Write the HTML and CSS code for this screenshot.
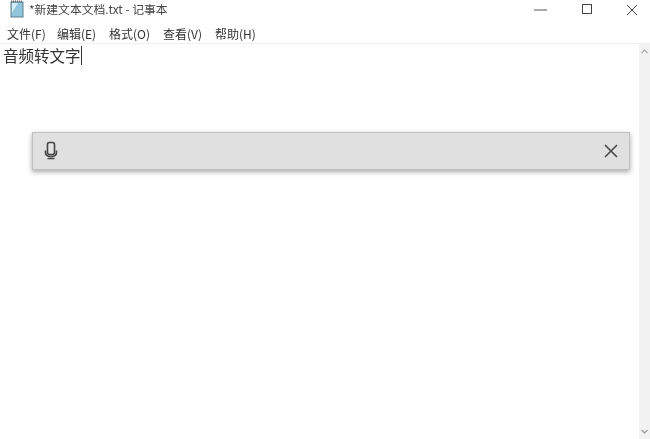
FILE: index.html
```html
<!DOCTYPE html>
<html lang="zh-CN">
<head>
<meta charset="utf-8">
<title>记事本</title>
<link rel="stylesheet" href="styles.css">
</head>
<body>
<div class="window">
  <header class="titlebar">
    <svg class="app-icon" width="18" height="18" viewBox="0 0 18 18">
      <rect x="3" y="2" width="12" height="15" fill="#8fc4da" stroke="#5f7f90"/>
      <path d="M4 3h6l-6 10z" fill="#d4ecf5"/>
      <path d="M3 1.5h12" stroke="#666" stroke-width="2" stroke-dasharray="1 1"/>
    </svg>
    <span class="title">*新建文本文档.txt - 记事本</span>
    <div class="controls">
      <svg class="ctl" width="46" height="20" viewBox="0 0 46 20"><path d="M16 10h13" stroke="#555" stroke-width="1"/></svg>
      <svg class="ctl" width="46" height="20" viewBox="0 0 46 20"><rect x="18.500" y="4.500" width="9" height="9" fill="none" stroke="#444" stroke-width="1"/></svg>
      <svg class="ctl" width="46" height="20" viewBox="0 0 46 20"><path d="M17 5l10 10M27 5L17 15" stroke="#444" stroke-width="1" fill="none"/></svg>
    </div>
  </header>
  <nav class="menubar">
    <span class="m1">文件(F)</span><span class="m2">编辑(E)</span><span class="m3">格式(O)</span><span class="m4">查看(V)</span><span class="m5">帮助(H)</span>
  </nav>
  <main class="body">
    <div class="editor"><span class="text">音频转文字</span><span class="caret"></span></div>
    <aside class="scrollbar">
      <svg width="11" height="11" viewBox="0 0 11 11"><path d="M2.500 7L5.500 4l3 3" fill="none" stroke="#aaa" stroke-width="1.2"/></svg>
      <svg width="11" height="11" viewBox="0 0 11 11"><path d="M2.500 4l3 3 3-3" fill="none" stroke="#999" stroke-width="1.2"/></svg>
    </aside>
  </main>
  <div class="voicebar">
    <svg width="14" height="20" viewBox="0 0 14 20">
      <rect x="3.500" y="1.500" width="7" height="12" rx="2" fill="#e4e4e4" stroke="#444" stroke-width="1.6"/>
      <path d="M1.500 9.500v2c0 2.500 2 4 5.500 4s5.500-1.500 5.500-4v-2M3.500 17.500h7" fill="none" stroke="#444" stroke-width="1.6"/>
    </svg>
    <svg width="16" height="16" viewBox="0 0 16 16"><path d="M2 2l12 12M14 2L2 14" stroke="#444" stroke-width="1.5" fill="none"/></svg>
  </div>
</div>
</body>
</html>
```
FILE: styles.css
```css
* { box-sizing: border-box; }
html, body { margin: 0; height: 100%; background: #fff; overflow: hidden; }
.window {
  position: relative;
  width: 650px;
  height: 439px;
  display: flex;
  flex-direction: column;
  font-family: "Noto Sans CJK SC", "Liberation Sans", sans-serif;
  color: #333;
  filter: blur(0.35px);
}
.titlebar {
  height: 20px;
  display: flex;
  align-items: flex-start;
  padding-left: 8px;
  flex: none;
}
.app-icon { flex: none; }
.title { margin-left: 3px; font-size: 11.800px; color: #444; line-height: 18px; }
.controls { margin-left: auto; display: flex; margin-right: -6px; }
.ctl { display: block; }
.menubar {
  height: 24px;
  flex: none;
  display: flex;
  align-items: center;
  padding: 4px 0 0 7px;
  font-size: 12px;
  color: #333;
  border-bottom: 1px solid #f0f0f0;
}
.m1 { width: 50px; }
.m2 { width: 52px; }
.m3 { width: 54px; }
.m4 { width: 52px; }
.m5 { width: 42px; }
.body { flex: 1; display: flex; min-height: 0; }
.editor { flex: 1; padding: 0 0 0 3px; display: flex; align-items: flex-start; }
.text { font-size: 15.500px; line-height: 22px; color: #333; }
.caret { width: 1px; height: 19px; margin-top: 2px; background: #333; }
.scrollbar {
  width: 11px;
  background: #f2f2f2;
  display: flex;
  flex-direction: column;
  justify-content: space-between;
  padding: 2px 0;
}
.scrollbar svg { display: block; }
.voicebar {
  position: absolute;
  left: 32px;
  top: 132px;
  width: 598px;
  height: 38px;
  background: #e0e0e0;
  border: 1px solid #c0c0c0;
  box-shadow: 0 2px 5px rgba(0, 0, 0, 0.35);
  display: flex;
  align-items: center;
  justify-content: space-between;
  padding: 0 10px 0 11px;
}
```
